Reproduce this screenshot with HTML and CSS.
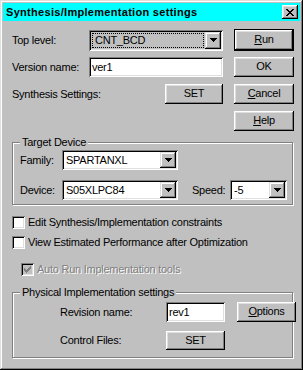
FILE: index.html
```html
<!DOCTYPE html>
<html>
<head>
<meta charset="utf-8">
<link rel="stylesheet" href="styles.css">
</head>
<body>
<div class="window">
  <div class="titlebar">
    <span class="title">Synthesis/Implementation settings</span>
    <span class="close-btn"><svg width="8" height="7" viewBox="0 0 8 7"><path d="M0 0h2v1H0zM6 0h2v1H6zM1 1h2v1H1zM5 1h2v1H5zM2 2h4v1H2zM3 3h2v1H3zM2 4h4v1H2zM1 5h2v1H1zM5 5h2v1H5zM0 6h2v1H0zM6 6h2v1H6z" fill="#000"/></svg></span>
  </div>
  <div class="content">
    <div class="top-grid">
      <span class="label">Top level:</span>
      <div class="combo combo-top">
        <span class="combo-text focus"><span class="focus-rect">CNT_BCD</span></span>
        <span class="drop-btn"><svg width="7" height="4" viewBox="0 0 7 4"><path d="M0 0h7v1H0zM1 1h5v1H1zM2 2h3v1H2zM3 3h1v1H3z" fill="#000"/></svg></span>
      </div>
      <div class="btn btn-default btn-col"><span><u>R</u>un</span></div>

      <span class="label">Version name:</span>
      <div class="textbox tb-version">ver1</div>
      <div class="btn btn-col"><span>OK</span></div>

      <span class="label">Synthesis Settings:</span>
      <div class="btn btn-set"><span>SET</span></div>
      <div class="btn btn-col"><span><u>C</u>ancel</span></div>

      <div class="btn btn-col"><span><u>H</u>elp</span></div>
    </div>

    <div class="group group-target">
      <span class="caption">Target Device</span>
      <div class="row row-family">
        <span class="label lbl-dev">Family:</span>
        <div class="combo combo-dev">
          <span class="combo-text">SPARTANXL</span>
          <span class="drop-btn"><svg width="7" height="4" viewBox="0 0 7 4"><path d="M0 0h7v1H0zM1 1h5v1H1zM2 2h3v1H2zM3 3h1v1H3z" fill="#000"/></svg></span>
        </div>
      </div>
      <div class="row row-device">
        <span class="label lbl-dev">Device:</span>
        <div class="combo combo-dev">
          <span class="combo-text">S05XLPC84</span>
          <span class="drop-btn"><svg width="7" height="4" viewBox="0 0 7 4"><path d="M0 0h7v1H0zM1 1h5v1H1zM2 2h3v1H2zM3 3h1v1H3z" fill="#000"/></svg></span>
        </div>
        <span class="label lbl-speed">Speed:</span>
        <div class="combo combo-speed">
          <span class="combo-text">-5</span>
          <span class="drop-btn"><svg width="7" height="4" viewBox="0 0 7 4"><path d="M0 0h7v1H0zM1 1h5v1H1zM2 2h3v1H2zM3 3h1v1H3z" fill="#000"/></svg></span>
        </div>
      </div>
    </div>

    <div class="check-row cr-edit"><span class="checkbox"></span><span>Edit Synthesis/Implementation constraints</span></div>
    <div class="check-row cr-view"><span class="checkbox"></span><span>View Estimated Performance after Optimization</span></div>
    <div class="check-row cr-auto disabled"><span class="checkbox checked-disabled"><svg width="7" height="7" viewBox="0 0 7 7"><path d="M6 0h1v1H6zM5 1h2v1H5zM0 2h1v1H0zM4 2h3v1H4zM0 3h2v1H0zM3 3h3v1H3zM0 4h5v1H0zM1 5h3v1H1zM2 6h1v1H2z" fill="#808080"/></svg></span><span class="dis-text">Auto Run Implementation tools</span></div>

    <div class="group group-phys">
      <span class="caption">Physical Implementation settings</span>
      <div class="phys-grid">
        <span class="label">Revision name:</span>
        <div class="textbox tb-rev">rev1</div>
        <div class="btn btn-options"><span><u>O</u>ptions</span></div>
        <span class="label">Control Files:</span>
        <div class="btn btn-ctl"><span>SET</span></div>
      </div>
    </div>
  </div>
</div>
</body>
</html>
```

FILE: styles.css
```css
body {
  margin: 0;
  background: #c0c0c0;
  font-family: "Liberation Sans", Arial, sans-serif;
  font-size: 11px;
  letter-spacing: -0.25px;
  color: #000;
}
.window {
  width: 303px;
  height: 370px;
  box-sizing: border-box;
  padding: 3px;
  background: #c0c0c0;
  box-shadow: inset -1px -1px #000, inset 1px 1px #dfdfdf, inset -2px -2px #808080, inset 2px 2px #fff;
  display: flex;
  flex-direction: column;
}
.titlebar {
  height: 18px;
  flex: none;
  background: #00ffff;
  display: flex;
  align-items: center;
  justify-content: space-between;
  padding: 0 2px 0 3px;
}
.title {
  font-weight: bold;
  font-size: 11px;
  letter-spacing: 0.3px;
}
.close-btn {
  width: 16px;
  height: 14px;
  box-sizing: border-box;
  background: #c0c0c0;
  box-shadow: inset -1px -1px #000, inset 1px 1px #fff, inset -2px -2px #808080, inset 2px 2px #dfdfdf;
  display: flex;
  align-items: center;
  justify-content: center;
  padding-right: 1px;
}
.close-btn svg { display: block; }
.content {
  display: flex;
  flex-direction: column;
  align-items: flex-start;
}
.label {
  white-space: nowrap;
  line-height: 13px;
}
.top-grid {
  display: grid;
  grid-template-columns: 77px 134px 11px 60px;
  grid-auto-rows: 22px;
  row-gap: 5px;
  padding: 8px 0 0 9px;
  align-items: center;
}
.btn-col {
  grid-column: 4;
}
.btn {
  height: 20px;
  box-sizing: border-box;
  background: #c0c0c0;
  box-shadow: inset -1px -1px #000, inset 1px 1px #fff, inset -2px -2px #808080, inset 2px 2px #dfdfdf;
  display: flex;
  align-items: center;
  justify-content: center;
  line-height: 13px;
  padding-bottom: 1px;
}
.btn-default {
  height: 22px;
  box-shadow: inset 0 0 0 1px #000, inset -2px -2px #000, inset 2px 2px #fff, inset -3px -3px #808080, inset 3px 3px #dfdfdf;
}
.btn-set {
  width: 58px;
  justify-self: end;
}
.combo {
  display: flex;
  box-sizing: border-box;
  padding: 2px;
  background: #fff;
  box-shadow: inset 1px 1px #808080, inset -1px -1px #fff, inset 2px 2px #000, inset -2px -2px #dfdfdf;
}
.combo-top {
  height: 21px;
  background: #c0c0c0;
}
.combo-text {
  flex: 1;
  display: flex;
  align-items: center;
  padding-left: 2px;
  line-height: 13px;
  white-space: nowrap;
  overflow: hidden;
}
.combo-text.focus {
  padding: 1px;
}
.focus-rect {
  flex: 1;
  align-self: stretch;
  display: flex;
  align-items: center;
  padding-left: 2px;
  border: 1px dotted #000;
}
.drop-btn {
  width: 16px;
  flex: none;
  box-sizing: border-box;
  background: #c0c0c0;
  box-shadow: inset -1px -1px #000, inset 1px 1px #dfdfdf, inset -2px -2px #808080, inset 2px 2px #fff;
  display: flex;
  align-items: center;
  justify-content: center;
  padding-bottom: 1px;
}
.drop-btn svg { display: block; }
.textbox {
  height: 20px;
  box-sizing: border-box;
  background: #fff;
  box-shadow: inset 1px 1px #808080, inset -1px -1px #fff, inset 2px 2px #000, inset -2px -2px #dfdfdf;
  display: flex;
  align-items: center;
  padding: 0 3px;
  line-height: 13px;
}
.group {
  position: relative;
  box-sizing: border-box;
  margin-left: 9px;
  width: 281px;
  border: 1px solid #808080;
  box-shadow: inset 1px 1px #fff, 1px 1px #fff;
}
.caption {
  position: absolute;
  top: -7px;
  left: 7px;
  padding: 0 2px;
  background: #c0c0c0;
  line-height: 13px;
  white-space: nowrap;
}
.group-target {
  margin-top: 10px;
  height: 63px;
  padding: 7px 0 0 7px;
  display: flex;
  flex-direction: column;
  gap: 10px;
}
.row {
  display: flex;
  align-items: center;
}
.lbl-dev { width: 42px; }
.combo-dev { width: 116px; height: 20px; }
.lbl-speed { width: 38px; margin-left: 14px; }
.combo-speed { width: 57px; height: 20px; }
.check-row {
  display: flex;
  align-items: center;
  margin-left: 9px;
  line-height: 13px;
  white-space: nowrap;
}
.checkbox {
  width: 13px;
  height: 13px;
  box-sizing: border-box;
  background: #fff;
  box-shadow: inset 1px 1px #808080, inset -1px -1px #fff, inset 2px 2px #000, inset -2px -2px #dfdfdf;
  margin-right: 3px;
  display: flex;
  align-items: center;
  justify-content: center;
}
.cr-edit { margin-top: 11px; }
.cr-view { margin-top: 7px; }
.cr-auto { margin-top: 14px; margin-left: 18px; }
.checked-disabled { background: #c0c0c0; }
.dis-text {
  color: #808080;
  text-shadow: 1px 1px 0 #fff;
}
.group-phys {
  margin-top: 16px;
  height: 66px;
  padding: 9px 0 0 47px;
}
.phys-grid {
  display: grid;
  grid-template-columns: 94px 59px 59px;
  column-gap: 12px;
  row-gap: 9px;
  align-items: center;
}
.btn-ctl { grid-column: 2; height: 19px; }
.tb-rev { height: 20px; }
```
